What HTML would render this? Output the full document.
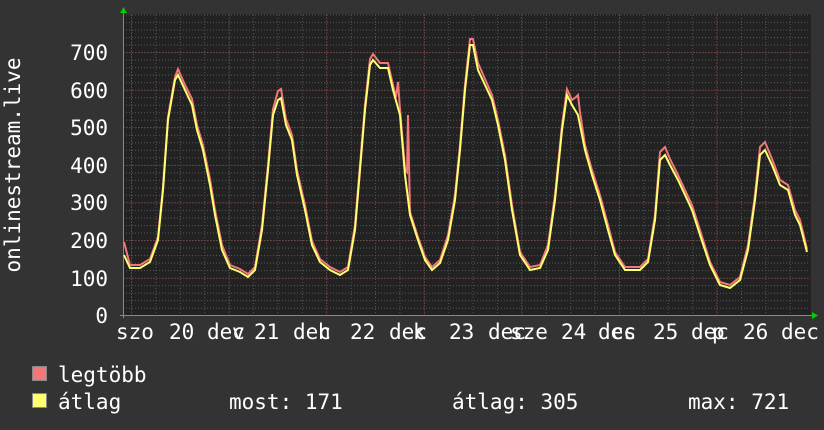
<!DOCTYPE html>
<html><head><meta charset="utf-8"><style>
html,body{margin:0;padding:0;background:#333;}
svg{display:block}
text{font-family:"DejaVu Sans Mono","Liberation Mono",monospace;font-size:21px;fill:#fff}
</style></head><body>
<svg width="824" height="430" xmlns="http://www.w3.org/2000/svg">
<defs>
<pattern id="h" x="0" y="52" width="824" height="7.52" patternUnits="userSpaceOnUse"><line x1="0" y1="0.5" x2="824" y2="0.5" stroke="#555" stroke-dasharray="1,2"/></pattern>
<pattern id="v" x="9" y="0" width="24.4" height="430" patternUnits="userSpaceOnUse"><line x1="0.5" y1="0" x2="0.5" y2="430" stroke="#555" stroke-dasharray="1,2"/></pattern>
</defs>
<rect width="824" height="430" fill="#333"/>
<rect x="123" y="14" width="688" height="302" fill="#222"/>
<rect x="124" y="14" width="686" height="301" fill="url(#h)"/>
<rect x="124" y="14" width="686" height="301" fill="url(#v)"/>
<g stroke="#6a3333" stroke-dasharray="1,2">
<line x1="124" y1="52.5" x2="810" y2="52.5"/><line x1="124" y1="90.5" x2="810" y2="90.5"/><line x1="124" y1="127.5" x2="810" y2="127.5"/><line x1="124" y1="165.5" x2="810" y2="165.5"/><line x1="124" y1="202.5" x2="810" y2="202.5"/><line x1="124" y1="240.5" x2="810" y2="240.5"/><line x1="124" y1="278.5" x2="810" y2="278.5"/>
<line x1="131.5" y1="14" x2="131.5" y2="315"/><line x1="229.5" y1="14" x2="229.5" y2="315"/><line x1="326.5" y1="14" x2="326.5" y2="315"/><line x1="424.5" y1="14" x2="424.5" y2="315"/><line x1="521.5" y1="14" x2="521.5" y2="315"/><line x1="619.5" y1="14" x2="619.5" y2="315"/><line x1="716.5" y1="14" x2="716.5" y2="315"/>
</g>
<line x1="120" y1="315.5" x2="814" y2="315.5" stroke="#888"/>
<line x1="123.5" y1="12" x2="123.5" y2="318" stroke="#888"/>
<polygon points="120,13 127,13 123.5,7" fill="#0c0"/>
<polygon points="812,312 812,319 818,315.5" fill="#0c0"/>
<g transform="translate(0,-3)">
<polyline fill="none" stroke="#f07878" stroke-width="2" points="124,245 130,268 140,268 150,262 158,240 163,190 168,120 175,80 178,72 185,88 192,102 197,128 203,148 210,182 215,213 222,248 230,268 240,272 248,277 255,270 262,228 268,168 273,112 278,94 281,92 286,122 292,138 297,173 305,208 312,244 320,262 330,270 340,275 348,270 355,228 360,168 365,108 370,62 373,57 380,66 388,66 393,88 396,100 398,85 400,112 405,172 407,175 408,118 410,215 418,240 425,260 432,270 440,263 448,238 455,198 460,148 465,88 470,42 473,42 478,66 485,82 492,98 498,123 505,158 512,208 520,255 530,270 540,268 548,248 555,198 562,128 567,92 572,103 576,100 578,98 580,115 585,148 592,173 600,198 608,228 615,255 625,270 640,270 648,262 655,218 660,155 665,150 670,162 678,178 685,193 692,208 700,233 710,265 720,285 730,288 740,280 748,248 755,198 760,150 765,145 772,162 780,183 788,188 795,213 800,223 807,252"/>
</g>
<polyline fill="none" stroke="#ffff70" stroke-width="2" points="124,255 130,268 140,268 150,262 158,240 163,190 168,120 175,80 178,75 185,90 192,105 197,130 203,150 210,185 215,215 222,250 230,268 240,272 248,277 255,270 262,230 268,170 273,115 278,100 281,98 286,125 292,140 297,175 305,210 312,245 320,262 330,270 340,275 348,270 355,230 360,170 365,110 370,65 373,60 380,68 388,68 393,90 400,115 405,175 410,215 418,240 425,260 432,270 440,263 448,240 455,200 460,150 465,90 470,45 473,45 478,70 485,85 492,100 498,125 505,160 512,210 520,255 530,270 540,268 548,250 555,200 562,130 567,95 572,105 578,115 585,150 592,175 600,200 608,230 615,255 625,270 640,270 648,262 655,220 660,160 665,155 670,165 678,180 685,195 692,210 700,235 710,265 720,285 730,288 740,280 748,250 755,200 760,155 765,150 772,165 780,185 788,190 795,215 800,225 807,252"/>
<g text-anchor="end">
<text x="108" y="60">700</text><text x="108" y="98">600</text><text x="108" y="135">500</text><text x="108" y="173">400</text><text x="108" y="210">300</text><text x="108" y="248">200</text><text x="108" y="286">100</text><text x="108" y="323">0</text>
</g>
<text transform="translate(20,165) rotate(-90)" text-anchor="middle">onlinestream.live</text>
<text x="116" y="339">szo</text><text x="169" y="339">20</text><text x="207" y="339">dec</text>
<text x="232" y="339">v</text><text x="254" y="339">21</text><text x="293" y="339">dec</text>
<text x="318" y="339">h</text><text x="350" y="339">22</text><text x="389" y="339">dec</text>
<text x="413" y="339">k</text><text x="449" y="339">23</text><text x="488" y="339">dec</text>
<text x="510" y="339">sze</text><text x="561" y="339">24</text><text x="598" y="339">dec</text>
<text x="611" y="339">cs</text><text x="653" y="339">25</text><text x="691" y="339">dec</text>
<text x="712" y="339">p</text><text x="743" y="339">26</text><text x="781" y="339">dec</text>
<rect x="32.5" y="366.5" width="14" height="14" fill="#f07878" stroke="#888"/>
<rect x="32.5" y="393.5" width="14" height="14" fill="#ffff70" stroke="#888"/>
<text x="58" y="382">legtöbb</text>
<text x="58" y="409">átlag</text>
<text x="229" y="409">most: 171</text>
<text x="452" y="409">átlag: 305</text>
<text x="688" y="409">max: 721</text>
</svg>
</body></html>
